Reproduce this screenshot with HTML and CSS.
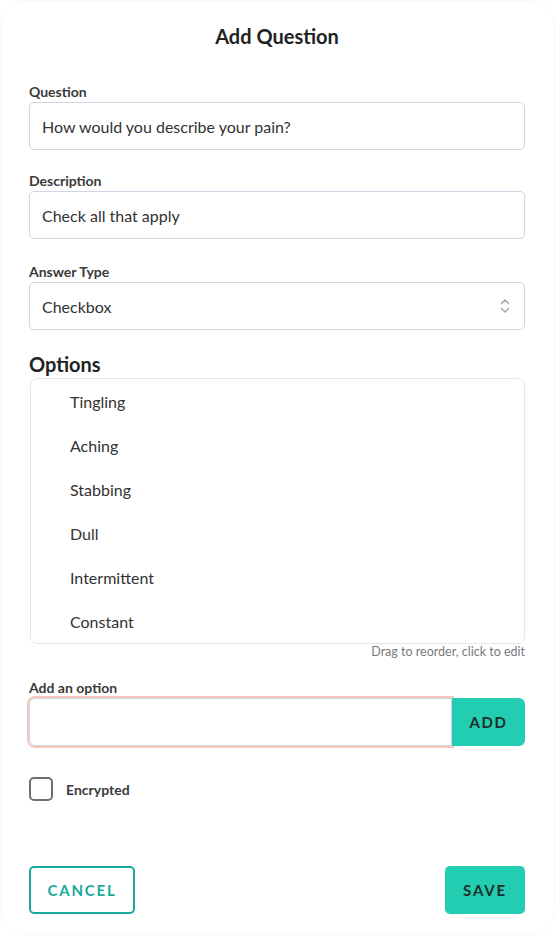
FILE: index.html
```html
<!DOCTYPE html>
<html lang="en">
<head>
<meta charset="utf-8">
<title>Add Question</title>
<link rel="stylesheet" href="styles.css">
</head>
<body>
<div class="card">
  <h1 class="title">Add Question</h1>

  <div class="field field-q">
    <label class="label">Question</label>
    <div class="input">How would you describe your pain?</div>
  </div>

  <div class="field field-d">
    <label class="label">Description</label>
    <div class="input">Check all that apply</div>
  </div>

  <div class="field field-a">
    <label class="label">Answer Type</label>
    <div class="input select">
      <span>Checkbox</span>
      <svg class="chev" width="10" height="16" viewBox="0 0 10 16" fill="none" stroke="#a9a9a9" stroke-width="1.6" stroke-linecap="round" stroke-linejoin="round">
        <path d="M1.5 5.5 L5 2 L8.5 5.5"/>
        <path d="M1.5 10.5 L5 14 L8.5 10.5"/>
      </svg>
    </div>
  </div>

  <h2 class="options-title">Options</h2>
  <ul class="options">
    <li>Tingling</li>
    <li>Aching</li>
    <li>Stabbing</li>
    <li>Dull</li>
    <li>Intermittent</li>
    <li>Constant</li>
  </ul>
  <div class="hint">Drag to reorder, click to edit</div>

  <div class="add-field">
    <label class="label">Add an option</label>
    <div class="add-row">
      <div class="add-input"></div>
      <button class="add-btn">ADD</button>
    </div>
  </div>

  <div class="check-row">
    <span class="checkbox"></span>
    <span class="check-label">Encrypted</span>
  </div>

  <div class="actions">
    <button class="btn-cancel">CANCEL</button>
    <button class="btn-save">SAVE</button>
  </div>
</div>
</body>
</html>
```

FILE: styles.css
```css
* { box-sizing: border-box; }

html, body {
  margin: 0;
  padding: 0;
  background: #ffffff;
}

body {
  font-family: Lato, "Open Sans", "Liberation Sans", sans-serif;
  color: #333333;
}

.card {
  width: 555px;
  height: 935px;
  border: 1px solid #f8f8f8;
  border-radius: 26px;
  padding: 23px 29px 0 28px;
  display: flex;
  flex-direction: column;
}

.title {
  margin: 0 0 35px 0;
  font-size: 20px;
  line-height: 24px;
  font-weight: 700;
  text-align: center;
  color: #222222;
}

.field-q { margin-bottom: 22px; }
.field-d { margin-bottom: 24px; }
.field-a { margin-bottom: 22px; }

.label {
  display: block;
  font-size: 14px;
  line-height: 17px;
  font-weight: 700;
  color: #3a3a3a;
  margin-bottom: 2px;
}

.input {
  height: 48px;
  border: 1px solid #cdd6e5;
  border-radius: 5px;
  padding: 0 12px;
  display: flex;
  align-items: center;
  font-size: 16px;
  color: #333333;
}

.select {
  justify-content: space-between;
  padding-right: 14px;
}

.chev { display: block; }

.options-title {
  margin: 0 0 2px 0;
  font-size: 20px;
  line-height: 24px;
  font-weight: 700;
  color: #222222;
}

.options {
  list-style: none;
  margin: 0 0 0 1px;
  padding: 0;
  border: 1px solid #e3e7ee;
  border-radius: 7px;
}

.options li {
  height: 44px;
  display: flex;
  align-items: center;
  padding-left: 39px;
  font-size: 16px;
  color: #333333;
}

.hint {
  text-align: right;
  font-size: 12.5px;
  line-height: 16px;
  color: #7a7a7a;
  margin-bottom: 19px;
}

.add-field {
  margin-bottom: 31px;
}

.add-row {
  display: flex;
  height: 48px;
}

.add-input {
  flex: 0 0 423px;
  border: 1px solid #cdd6e5;
  border-radius: 6px 0 0 6px;
  box-shadow: 0 0 0 2px #f6c8ba;
}

.add-btn {
  flex: 1;
  border: none;
  background: #22cdb1;
  border-radius: 0 6px 6px 0;
  font-family: inherit;
  font-size: 15px;
  font-weight: 700;
  letter-spacing: 1.6px;
  color: #1e2d2c;
  padding: 0;
}

.check-row {
  display: flex;
  align-items: center;
  gap: 13px;
  height: 24px;
}

.checkbox {
  width: 24px;
  height: 24px;
  border: 2px solid #6e6e73;
  border-radius: 5px;
}

.check-label {
  font-size: 14px;
  font-weight: 700;
  color: #3a3a3a;
}

.actions {
  margin-top: 65px;
  display: flex;
  justify-content: space-between;
}

.actions button {
  height: 48px;
  border-radius: 5px;
  font-family: inherit;
  font-size: 15px;
  font-weight: 700;
  letter-spacing: 1.8px;
  padding: 0;
}

.btn-cancel {
  width: 106px;
  background: #ffffff;
  border: 2px solid #18ab9c;
  color: #18ab9c;
}

.btn-save {
  width: 80px;
  background: #22cdb1;
  border: none;
  color: #1e2d2c;
}
```
